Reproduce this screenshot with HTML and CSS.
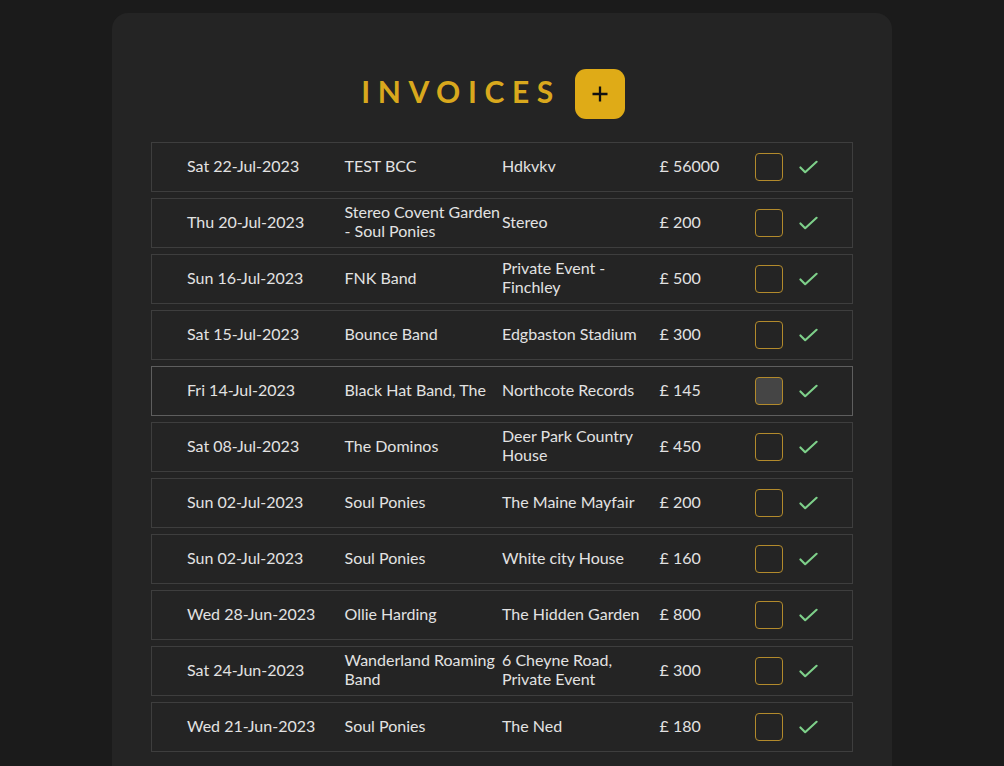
FILE: index.html
```html
<!DOCTYPE html>
<html lang="en">
<head>
<meta charset="utf-8">
<title>Invoices</title>
<link rel="stylesheet" href="styles.css">
</head>
<body>
<main class="card">
  <header class="head">
    <h1 class="title">INVOICES</h1>
    <button class="add" type="button" aria-label="Add invoice">
      <svg width="16" height="16" viewBox="0 0 16 16"><path d="M8 0.5v15M0.5 8h15" stroke="#111" stroke-width="2.3" fill="none"/></svg>
    </button>
  </header>
  <ul class="list">
    <li class="row"><span class="c date">Sat 22-Jul-2023</span><span class="c">TEST BCC</span><span class="c">Hdkvkv</span><span class="c amt">£ 56000</span><span class="box"></span><svg class="tick" viewBox="0 0 20 14"><path d="M1.5 7.5l5 5 12-11" /></svg></li>
    <li class="row"><span class="c date">Thu 20-Jul-2023</span><span class="c">Stereo Covent Garden - Soul Ponies</span><span class="c">Stereo</span><span class="c amt">£ 200</span><span class="box"></span><svg class="tick" viewBox="0 0 20 14"><path d="M1.5 7.5l5 5 12-11" /></svg></li>
    <li class="row"><span class="c date">Sun 16-Jul-2023</span><span class="c">FNK Band</span><span class="c">Private Event - Finchley</span><span class="c amt">£ 500</span><span class="box"></span><svg class="tick" viewBox="0 0 20 14"><path d="M1.5 7.5l5 5 12-11" /></svg></li>
    <li class="row"><span class="c date">Sat 15-Jul-2023</span><span class="c">Bounce Band</span><span class="c">Edgbaston Stadium</span><span class="c amt">£ 300</span><span class="box"></span><svg class="tick" viewBox="0 0 20 14"><path d="M1.5 7.5l5 5 12-11" /></svg></li>
    <li class="row hover"><span class="c date">Fri 14-Jul-2023</span><span class="c">Black Hat Band, The</span><span class="c">Northcote Records</span><span class="c amt">£ 145</span><span class="box"></span><svg class="tick" viewBox="0 0 20 14"><path d="M1.5 7.5l5 5 12-11" /></svg></li>
    <li class="row"><span class="c date">Sat 08-Jul-2023</span><span class="c">The Dominos</span><span class="c">Deer Park Country House</span><span class="c amt">£ 450</span><span class="box"></span><svg class="tick" viewBox="0 0 20 14"><path d="M1.5 7.5l5 5 12-11" /></svg></li>
    <li class="row"><span class="c date">Sun 02-Jul-2023</span><span class="c">Soul Ponies</span><span class="c">The Maine Mayfair</span><span class="c amt">£ 200</span><span class="box"></span><svg class="tick" viewBox="0 0 20 14"><path d="M1.5 7.5l5 5 12-11" /></svg></li>
    <li class="row"><span class="c date">Sun 02-Jul-2023</span><span class="c">Soul Ponies</span><span class="c">White city House</span><span class="c amt">£ 160</span><span class="box"></span><svg class="tick" viewBox="0 0 20 14"><path d="M1.5 7.5l5 5 12-11" /></svg></li>
    <li class="row"><span class="c date">Wed 28-Jun-2023</span><span class="c">Ollie Harding</span><span class="c">The Hidden Garden</span><span class="c amt">£ 800</span><span class="box"></span><svg class="tick" viewBox="0 0 20 14"><path d="M1.5 7.5l5 5 12-11" /></svg></li>
    <li class="row"><span class="c date">Sat 24-Jun-2023</span><span class="c">Wanderland Roaming Band</span><span class="c">6 Cheyne Road, Private Event</span><span class="c amt">£ 300</span><span class="box"></span><svg class="tick" viewBox="0 0 20 14"><path d="M1.5 7.5l5 5 12-11" /></svg></li>
    <li class="row"><span class="c date">Wed 21-Jun-2023</span><span class="c">Soul Ponies</span><span class="c">The Ned</span><span class="c amt">£ 180</span><span class="box"></span><svg class="tick" viewBox="0 0 20 14"><path d="M1.5 7.5l5 5 12-11" /></svg></li>
  </ul>
</main>
</body>
</html>
```
FILE: styles.css
```css
html, body {
  margin: 0;
  padding: 0;
  background: #1b1b1b;
  font-family: Lato, "Noto Sans", sans-serif;
  color: #e2e2e2;
}
.card {
  width: 780px;
  margin: 13px auto 0;
  background: #242424;
  border-radius: 16px;
  padding: 56px 39px 40px;
  box-sizing: border-box;
  min-height: 780px;
}
.head {
  display: flex;
  justify-content: center;
  align-items: center;
  gap: 14px;
  margin: 0 0 23px 0;
  padding-right: 18px;
}
.title {
  margin: 0;
  font-size: 30px;
  font-weight: 700;
  letter-spacing: 7.6px;
  color: #d9a81d;
  line-height: 44px;
  padding-bottom: 6px;
}
.add {
  width: 50px;
  height: 50px;
  border: none;
  border-radius: 11px;
  background: #dfab17;
  display: flex;
  align-items: center;
  justify-content: center;
  padding: 0;
}
.list {
  list-style: none;
  margin: 0;
  padding: 0;
  display: flex;
  flex-direction: column;
  gap: 6px;
}
.row {
  height: 50px;
  box-sizing: border-box;
  border: 1px solid #3e3e3e;
  display: flex;
  align-items: center;
  padding: 0 0 4px 35px;
  font-size: 16px;
  line-height: 19px;
}
.row.hover {
  border-color: #5e5e5e;
}
.c {
  width: 157.5px;
  flex: none;
}
.amt {
  width: 95px;
}
.box {
  width: 28px;
  height: 28px;
  box-sizing: border-box;
  border: 1px solid #b28a2c;
  border-radius: 4px;
  flex: none;
  margin-top: 4px;
}
.hover .box {
  background: #454545;
}
.tick {
  width: 19px;
  height: 14px;
  margin-left: 16px;
  margin-top: 4px;
  flex: none;
  fill: none;
  stroke: #7ed08a;
  stroke-width: 2.2;
  stroke-linecap: round;
  stroke-linejoin: round;
}
```
